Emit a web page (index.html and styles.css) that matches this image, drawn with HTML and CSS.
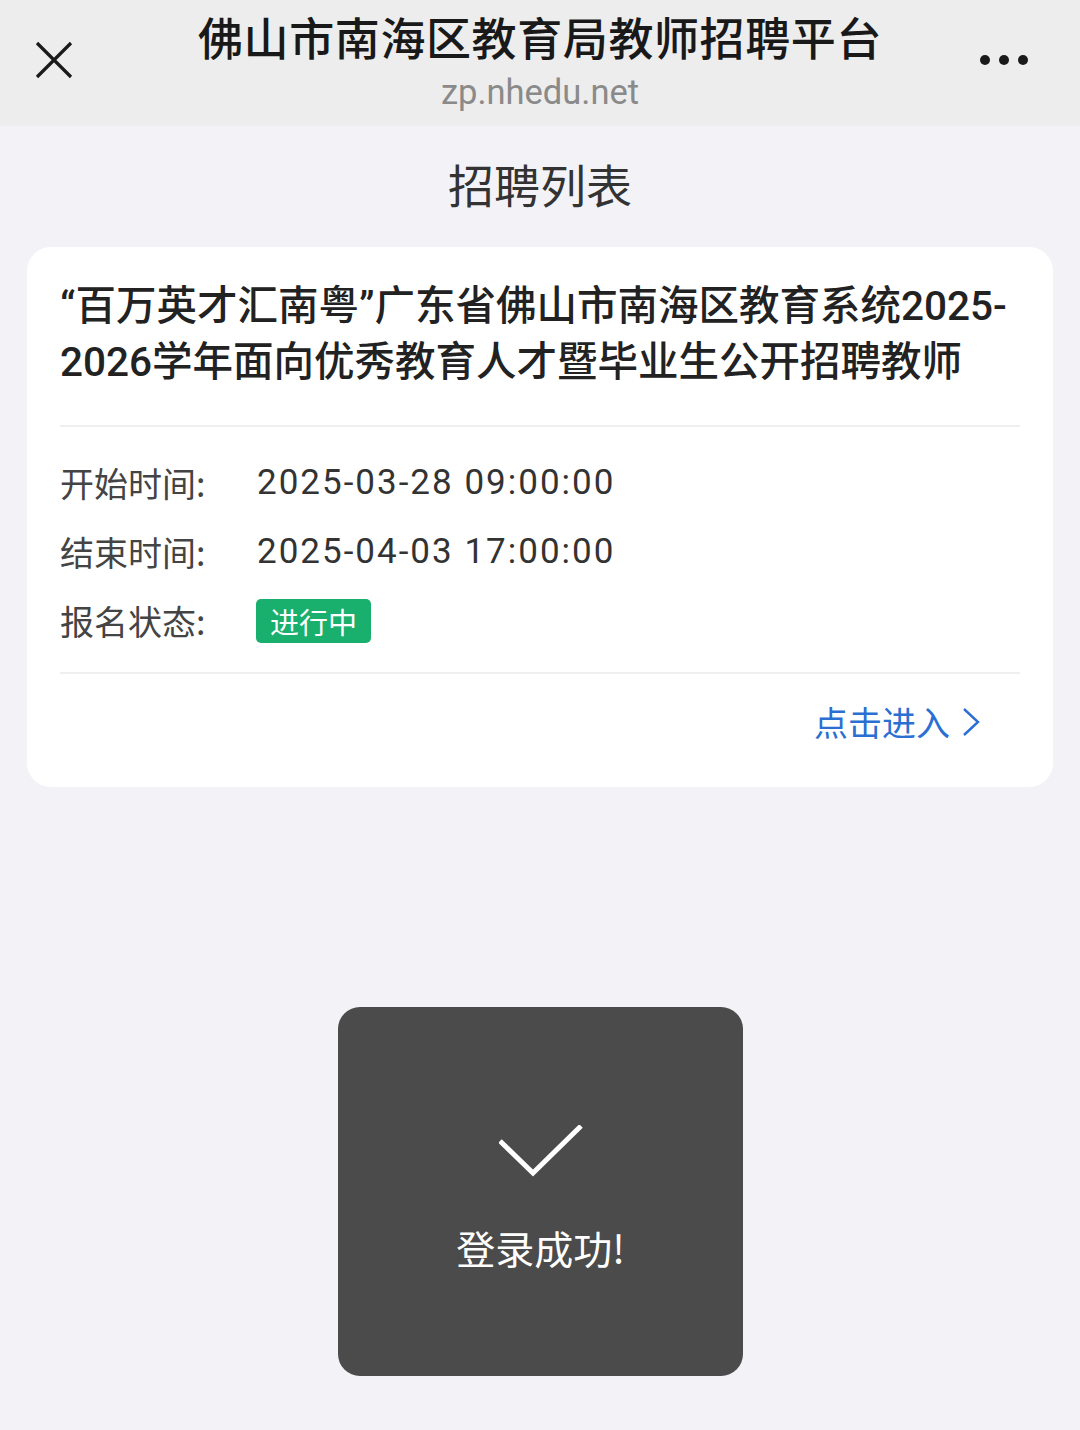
FILE: index.html
```html
<!DOCTYPE html>
<html lang="zh-CN">
<head>
<meta charset="utf-8">
<title>招聘列表</title>
<link rel="stylesheet" href="styles.css">
</head>
<body>
<header class="topbar">
  <div class="bar-left">
    <svg class="close-icon" width="38" height="38" viewBox="0 0 38 38"><path d="M2 2 L36 36 M36 2 L2 36" stroke="#1a1a1a" stroke-width="3.2" fill="none"/></svg>
  </div>
  <div class="bar-center">
    <div class="bar-title">佛山市南海区教育局教师招聘平台</div>
    <div class="bar-url">zp.nhedu.net</div>
  </div>
  <div class="bar-right">
    <span class="dot"></span><span class="dot"></span><span class="dot"></span>
  </div>
</header>

<main class="page">
  <h1 class="page-title">招聘列表</h1>
  <section class="card">
    <div class="card-title">“百万英才汇南粤”广东省佛山市南海区教育系统2025-<wbr>2026学年面向优秀教育人才暨毕业生公开招聘教师</div>
    <div class="card-info">
      <div class="info-row"><span class="info-label">开始时间:</span><span class="info-value">2025-03-28 09:00:00</span></div>
      <div class="info-row"><span class="info-label">结束时间:</span><span class="info-value">2025-04-03 17:00:00</span></div>
      <div class="info-row"><span class="info-label">报名状态:</span><span class="badge">进行中</span></div>
    </div>
    <div class="card-foot">
      <a class="enter-link">点击进入<svg class="chev" width="18" height="30" viewBox="0 0 18 30"><path d="M2 2 L16 15 L2 28" stroke="#2a6fd1" stroke-width="2.4" fill="none"/></svg></a>
    </div>
  </section>
</main>

<div class="toast">
  <svg class="toast-check" width="84" height="52" viewBox="0 0 84 52"><path d="M1 16 L34 48 L82 1" stroke="#ffffff" stroke-width="5" fill="none"/></svg>
  <div class="toast-text">登录成功!</div>
</div>
</body>
</html>
```
FILE: styles.css
```css
* { box-sizing: border-box; }
html, body {
  margin: 0;
  padding: 0;
}
body {
  width: 1080px;
  height: 1430px;
  background: #f3f3f7;
  font-family: "Noto Sans CJK SC", "Noto Sans", sans-serif;
  color: #333;
  position: relative;
  overflow: hidden;
}
.topbar {
  height: 126px;
  background: #ededed;
  display: grid;
  grid-template-columns: 150px 1fr 150px;
  align-items: center;
}
.bar-left {
  padding-left: 35px;
  display: flex;
  align-items: center;
  padding-bottom: 6px;
}
.close-icon { display: block; }
.bar-center {
  display: flex;
  flex-direction: column;
  align-items: center;
  padding-top: 7px;
  height: 126px;
}
.bar-title {
  font-size: 45px;
  line-height: 60px;
  font-weight: 500;
  color: #191919;
  letter-spacing: 0.6px;
}
.bar-url {
  margin-top: 5px;
  font-family: "Roboto", "Noto Sans", sans-serif;
  font-size: 34.5px;
  line-height: 40px;
  color: #8a8a8a;
}
.bar-right {
  display: flex;
  justify-content: flex-end;
  align-items: center;
  gap: 9px;
  padding-right: 52px;
  padding-bottom: 6px;
}
.dot {
  width: 10px;
  height: 10px;
  border-radius: 50%;
  background: #1a1a1a;
}
.page {
  padding: 0 27px;
}
.page-title {
  margin: 27px 0 34px;
  text-align: center;
  font-size: 46px;
  line-height: 60px;
  font-weight: 400;
  color: #333;
}
.card {
  background: #fff;
  border-radius: 24px;
  padding: 31px 33px 40px;
}
.card-title {
  font-family: "Roboto", "Noto Sans CJK SC", sans-serif;
  font-size: 40.5px;
  line-height: 56px;
  font-weight: 500;
  color: #222;
  padding-bottom: 35px;
  border-bottom: 2px solid #efefef;
}
.card-info {
  padding: 21px 0 17px;
  border-bottom: 2px solid #efefef;
}
.info-row {
  display: flex;
  align-items: center;
  height: 69px;
}
.info-label {
  width: 197px;
  font-size: 34px;
  color: #444;
}
.info-value {
  font-family: "Roboto", "Noto Sans", sans-serif;
  font-size: 35px;
  color: #333;
  letter-spacing: 2px;
}
.badge {
  display: inline-flex;
  align-items: center;
  justify-content: center;
  height: 44px;
  padding: 0 14px;
  background: #18b06c;
  color: #fff;
  font-size: 29px;
  border-radius: 5px;
  margin-left: -1px;
}
.card-foot {
  display: flex;
  justify-content: flex-end;
  padding-top: 23px;
  padding-right: 40px;
}
.enter-link {
  display: flex;
  align-items: center;
  gap: 12px;
  font-size: 34px;
  line-height: 50px;
  color: #2a6fd1;
}
.chev { display: block; }
.toast {
  position: absolute;
  left: 338px;
  top: 1007px;
  width: 405px;
  height: 369px;
  background: #4b4b4b;
  border-radius: 22px;
  display: flex;
  flex-direction: column;
  align-items: center;
  padding-top: 118px;
}
.toast-check { display: block; }
.toast-text {
  margin-top: 45px;
  font-size: 39px;
  line-height: 50px;
  color: #fff;
}
```
